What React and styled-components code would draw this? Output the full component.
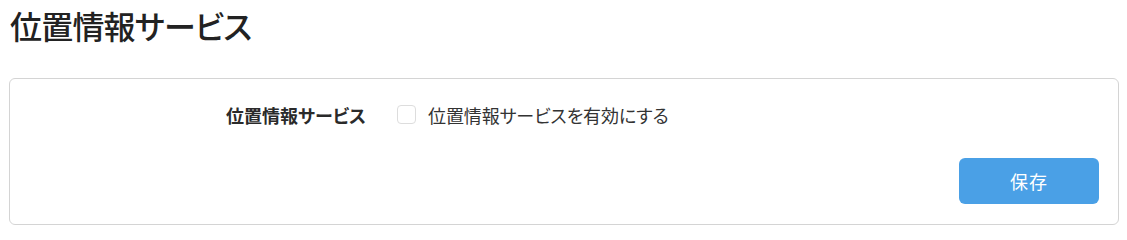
import React, { useState } from "react";
import styled, { createGlobalStyle } from "styled-components";

const Global = createGlobalStyle`
  html, body { margin: 0; padding: 0; background: #fff; }
  body {
    font-family: "Noto Sans CJK JP", "Noto Sans", sans-serif;
    color: #333;
  }
`;

const Page = styled.div`
  padding: 0 8px 0 9px;
`;

const Title = styled.h1`
  margin: 0 0 27px 1px;
  font-size: 32px;
  line-height: 51px;
  font-weight: 500;
  color: #222;
  font-feature-settings: "palt";
  letter-spacing: -0.8px;
`;

const Card = styled.section`
  border: 1px solid #d4d4d4;
  border-radius: 6px;
  padding: 18px 19px 20px 0;
  display: flex;
  flex-direction: column;
`;

const Row = styled.div`
  display: grid;
  grid-template-columns: 356px 1fr;
  column-gap: 31px;
  align-items: center;
  min-height: 35px;
`;

const Label = styled.div`
  text-align: right;
  font-size: 18px;
  font-weight: 700;
  color: #2a2a2a;
  font-feature-settings: "palt";
`;

const CheckLabel = styled.label`
  display: inline-flex;
  align-items: center;
  gap: 12px;
  font-size: 18px;
  color: #333;
  cursor: pointer;
  font-feature-settings: "palt";
  letter-spacing: -0.1px;
`;

const Box = styled.span`
  width: 17px;
  height: 17px;
  border: 1px solid #dddddd;
  border-radius: 4px;
  background: ${(p) => (p.$checked ? "#4aa0e6" : "#fff")};
  display: inline-flex;
  align-items: center;
  justify-content: center;
`;

const HiddenInput = styled.input`
  display: none;
`;

const Actions = styled.div`
  display: flex;
  justify-content: flex-end;
  margin-top: 26px;
`;

const Button = styled.button`
  width: 140px;
  height: 46px;
  border: none;
  border-radius: 6px;
  background: #4aa0e6;
  color: #fff;
  font-family: inherit;
  font-size: 18px;
  letter-spacing: 1px;
  cursor: pointer;
`;

export default function App() {
  const [checked, setChecked] = useState(false);
  return (
    <Page>
      <Global />
      <Title>位置情報サービス</Title>
      <Card>
        <Row>
          <Label>位置情報サービス</Label>
          <CheckLabel>
            <HiddenInput
              type="checkbox"
              checked={checked}
              onChange={(e) => setChecked(e.target.checked)}
            />
            <Box $checked={checked}>
              {checked && (
                <svg width="12" height="12" viewBox="0 0 12 12">
                  <path d="M2 6.5l2.5 2.5L10 3.5" stroke="#fff" strokeWidth="2" fill="none" />
                </svg>
              )}
            </Box>
            位置情報サービスを有効にする
          </CheckLabel>
        </Row>
        <Actions>
          <Button>保存</Button>
        </Actions>
      </Card>
    </Page>
  );
}
